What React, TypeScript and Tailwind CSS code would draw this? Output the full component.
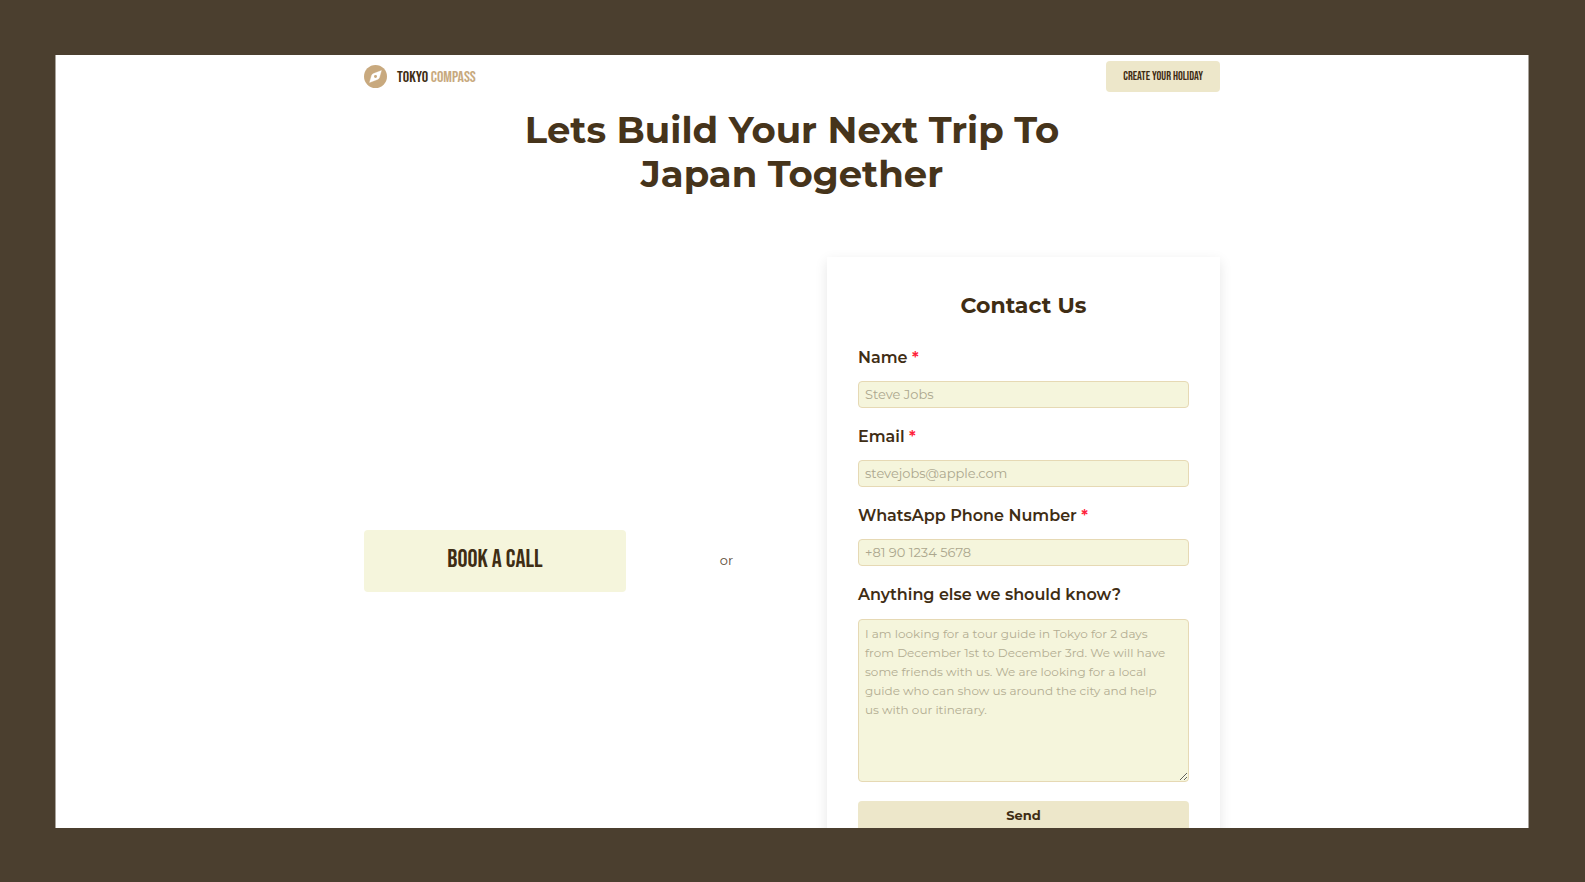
import { useState } from "react";

const bodyFont = "font-[Montserrat,sans-serif]";
const displayFont = "font-['Bebas_Neue',sans-serif]";

const fieldInput =
  "block w-full rounded border border-[#e6d9b4] bg-[#f5f5dc] px-1.5 text-[#3f2d14] outline-none";

const notesPlaceholder = [
  "I am looking for a tour guide in Tokyo for 2 days",
  "from December 1st to December 3rd. We will have",
  "some friends with us. We are looking for a local",
  "guide who can show us around the city and help",
  "us with our itinerary.",
].join("\n");

interface TextFieldProps {
  id: string;
  label: string;
  type: string;
  placeholder: string;
  value: string;
  onChange: (value: string) => void;
}

function TextField({ id, label, type, placeholder, value, onChange }: TextFieldProps) {
  return (
    <div className="mb-[17px]">
      <label htmlFor={id} className="mb-[11px] block text-base/6 font-semibold">
        {label} <span className="text-[#ff1f3d]">*</span>
      </label>
      <input
        id={id}
        type={type}
        required
        placeholder={placeholder}
        value={value}
        onChange={(e) => onChange(e.target.value)}
        className={`${fieldInput} h-[27px] pb-0.5 text-[13px] placeholder:text-[#aca78e]`}
      />
    </div>
  );
}

function Logo() {
  return (
    <a href="#" className="flex items-center gap-2.5">
      <svg viewBox="0 0 70 70" className="size-[23px]" aria-hidden="true">
        <circle cx="35" cy="35" r="35" fill="#c8a97e" />
        <path
          d="M17 53L23 32C24 29 26 27 29 26L53 17L47 38C46 41 44 43 41 44Z"
          fill="#fff"
          stroke="#fff"
          strokeWidth="1"
          strokeLinejoin="round"
        />
        <circle cx="35" cy="35" r="4.5" fill="#c8a97e" />
      </svg>
      <span className={`${displayFont} pt-0.5 text-base/6`}>
        TOKYO <span className="text-[#c8a97e]">COMPASS</span>
      </span>
    </a>
  );
}

export default function App() {
  const [name, setName] = useState("");
  const [email, setEmail] = useState("");
  const [phone, setPhone] = useState("");
  const [notes, setNotes] = useState("");

  return (
    <div className="h-screen bg-[#4b3f2f] pt-[55px] pr-14 pb-[54px] pl-[55px]">
      <div
        className={`${bodyFont} h-full overflow-hidden border-x border-[#a9a39c] bg-white text-[#3f2d14]`}
      >
        <div className="mx-auto max-w-[856px]">
          <header className="flex items-center justify-between py-1.5">
            <Logo />
            <button
              type="button"
              className={`${displayFont} h-[31px] rounded bg-[#ede7ca] px-[17px] text-[12px] font-semibold`}
            >
              CREATE YOUR HOLIDAY
            </button>
          </header>

          <h1 className="mx-auto max-w-[600px] pt-2.5 text-center text-[37px]/[44px] font-bold text-[#46341b]">
            Lets Build Your Next Trip To Japan Together
          </h1>

          <main className="mt-[61px] flex items-center justify-between">
            <button
              type="button"
              className={`${displayFont} h-[62px] w-[262px] rounded bg-[#f5f5dc] pb-0.5 text-[25px]`}
            >
              BOOK A CALL
            </button>

            <p className="text-[13px] text-[#5c4c36]">or</p>

            <form
              onSubmit={(e) => e.preventDefault()}
              className="w-[393px] bg-white px-[31px] py-8 shadow-[0_4px_12px_rgba(0,0,0,0.1)]"
            >
              <h2 className="mb-[23px] text-center text-[22px]/[34px] font-bold">Contact Us</h2>
              <TextField
                id="name"
                label="Name"
                type="text"
                placeholder="Steve Jobs"
                value={name}
                onChange={setName}
              />
              <TextField
                id="email"
                label="Email"
                type="email"
                placeholder="stevejobs@apple.com"
                value={email}
                onChange={setEmail}
              />
              <TextField
                id="phone"
                label="WhatsApp Phone Number"
                type="tel"
                placeholder="+81 90 1234 5678"
                value={phone}
                onChange={setPhone}
              />
              <label htmlFor="notes" className="mb-3 block text-base/6 font-semibold">
                Anything else we should know?
              </label>
              <textarea
                id="notes"
                placeholder={notesPlaceholder}
                value={notes}
                onChange={(e) => setNotes(e.target.value)}
                className={`${fieldInput} h-[163px] resize py-1 text-[12px]/[19px] placeholder:text-[#b3ad92]`}
              />
              <button
                type="submit"
                className="mt-[19px] h-[31px] w-full rounded bg-[#ede7ca] pb-0.5 text-[13px] font-bold"
              >
                Send
              </button>
            </form>
          </main>
        </div>
      </div>
    </div>
  );
}
